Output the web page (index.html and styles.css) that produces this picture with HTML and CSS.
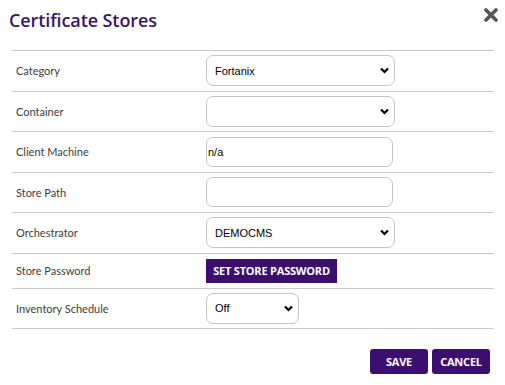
FILE: index.html
```html
<!DOCTYPE html>
<html lang="en">

<head>
    <meta charset="UTF-8">
    <meta name="viewport" content="width=device-width, initial-scale=1.0">
    <title>Certificate Stores</title>
    <link rel="stylesheet" href="styles.css">
</head>

<body>
    <div class="modal">
        <div class="modal-header">
            <h1>Certificate Stores</h1>
            <button class="close-btn" aria-label="Close">
                <svg width="14" height="14" viewBox="0 0 14 14">
                    <path d="M2 2 L12 12 M12 2 L2 12" stroke="#555" stroke-width="3.6" stroke-linecap="round" />
                </svg>
            </button>
        </div>

        <div class="form-table">
            <div class="form-row">
                <label class="row-label">Category</label>
                <div class="select-wrap wide">
                    <select class="field">
                        <option>Fortanix</option>
                    </select>
                </div>
            </div>
            <div class="form-row">
                <label class="row-label">Container</label>
                <div class="select-wrap wide">
                    <select class="field">
                        <option></option>
                    </select>
                </div>
            </div>
            <div class="form-row">
                <label class="row-label">Client Machine</label>
                <input class="field text" type="text" value="n/a">
            </div>
            <div class="form-row">
                <label class="row-label">Store Path</label>
                <input class="field text" type="text" value="">
            </div>
            <div class="form-row">
                <label class="row-label">Orchestrator</label>
                <div class="select-wrap wide">
                    <select class="field">
                        <option>DEMOCMS</option>
                    </select>
                </div>
            </div>
            <div class="form-row short">
                <label class="row-label">Store Password</label>
                <button class="btn btn-password">SET STORE PASSWORD</button>
            </div>
            <div class="form-row">
                <label class="row-label">Inventory Schedule</label>
                <div class="select-wrap narrow">
                    <select class="field">
                        <option>Off</option>
                    </select>
                </div>
            </div>
        </div>

        <div class="modal-footer">
            <button class="btn btn-footer">SAVE</button>
            <button class="btn btn-footer">CANCEL</button>
        </div>
    </div>
</body>

</html>
```

FILE: styles.css
```css
html,
body {
    margin: 0;
    padding: 0;
    background-color: #fff;
}

body {
    font-family: "Open Sans", Arial, sans-serif;
    color: #333;
}

.modal {
    width: 505px;
    height: 385px;
    box-sizing: border-box;
    padding: 0 11px 0 12px;
}

.modal-header {
    display: flex;
    justify-content: space-between;
    align-items: flex-start;
    height: 50px;
}

.modal-header h1 {
    margin: 8px 0 0 -3px;
    font-size: 18px;
    font-weight: 600;
    color: #3b1468;
    letter-spacing: -0.1px;
}

.close-btn {
    border: none;
    background: none;
    padding: 0;
    margin: 8px -4px 0 0;
    width: 14px;
    height: 14px;
    cursor: pointer;
    display: flex;
}

.form-table {
    border-top: 1px solid #c8c8c8;
}

.form-row {
    display: flex;
    align-items: center;
    box-sizing: border-box;
    height: 40.5px;
    border-bottom: 1px solid #c8c8c8;
}

.form-row.short {
    height: 35px;
}

.row-label {
    width: 190px;
    padding-left: 4px;
    font-family: Lato, Arial, sans-serif;
    font-size: 11px;
    color: #3c3c3c;
}

.select-wrap {
    position: relative;
    display: flex;
}

.select-wrap::after {
    content: "";
    position: absolute;
    top: 11px;
    right: 6px;
    width: 9px;
    height: 9px;
    background: url("data:image/svg+xml;utf8,<svg xmlns='http://www.w3.org/2000/svg' width='9' height='9' viewBox='0 0 9 9'><path d='M1 2.5 L4.5 6 L8 2.5' fill='none' stroke='black' stroke-width='2.2'/></svg>") no-repeat center;
    pointer-events: none;
}

.select-wrap.wide .field {
    width: 189px;
}

.select-wrap.narrow .field {
    width: 93px;
}

.field {
    height: 31px;
    box-sizing: border-box;
    border: 1px solid #c4c4c4;
    border-radius: 7px;
    background: #fff;
    font-family: Arial, "Liberation Sans", sans-serif;
    font-size: 11px;
    color: #000;
    padding: 0 8px;
    appearance: none;
    -webkit-appearance: none;
    outline: none;
}

.field.text {
    width: 187px;
    height: 30px;
    padding: 0 1px;
}

.btn {
    border: none;
    cursor: pointer;
    background-color: #3c0f6e;
    color: #fff;
    font-family: "Open Sans", Arial, sans-serif;
    font-weight: 700;
    font-size: 11px;
    letter-spacing: -0.2px;
}

.btn-password {
    width: 131px;
    height: 24px;
    padding: 0;
}

.modal-footer {
    display: flex;
    justify-content: flex-end;
    gap: 4px;
    margin-top: 20px;
    padding-right: 4px;
}

.btn-footer {
    height: 25px;
    width: 58px;
    border-radius: 3px;
    padding: 0;
}
```
